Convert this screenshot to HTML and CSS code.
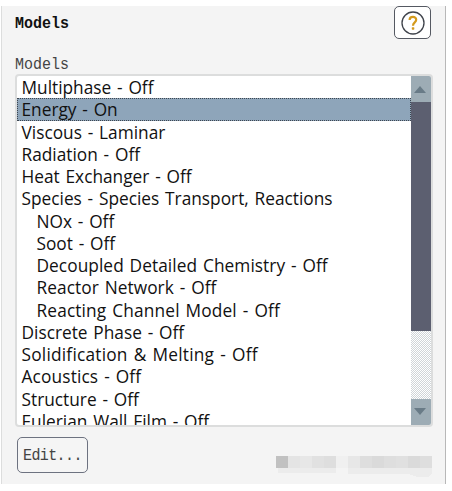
FILE: index.html
```html
<!DOCTYPE html>
<html lang="en">
<head>
<meta charset="utf-8">
<title>Models</title>
<link rel="stylesheet" href="styles.css">
</head>
<body>
<main class="panel">
  <header class="header">
    <h1 class="title mono">Models</h1>
    <button class="help" aria-label="Help">
      <svg width="24" height="24" viewBox="0 0 24 24" fill="none">
        <circle cx="12" cy="12" r="11" stroke="#3f434b" stroke-width="1.3"/>
        <path d="M8.6 9C8.7 4.9 15.2 5 15.2 8.7C15.2 11.5 12 11.2 12 14.7" stroke="#d49a1c" stroke-width="2.2"/>
        <rect x="10.8" y="16.2" width="2.5" height="2.5" rx=".6" fill="#d49a1c"/>
      </svg>
    </button>
  </header>
  <div class="label mono">Models</div>
  <section class="listbox">
    <ul class="list">
      <li class="row"><span>Multiphase - Off</span></li>
      <li class="row selected"><span>Energy - On</span></li>
      <li class="row"><span>Viscous - Laminar</span></li>
      <li class="row"><span>Radiation - Off</span></li>
      <li class="row"><span>Heat Exchanger - Off</span></li>
      <li class="row"><span>Species - Species Transport, Reactions</span></li>
      <li class="row child"><span>NOx - Off</span></li>
      <li class="row child"><span>Soot - Off</span></li>
      <li class="row child loose"><span>Decoupled Detailed Chemistry - Off</span></li>
      <li class="row child loose"><span>Reactor Network - Off</span></li>
      <li class="row child looser"><span>Reacting Channel Model - Off</span></li>
      <li class="row"><span>Discrete Phase - Off</span></li>
      <li class="row loosest"><span>Solidification &amp; Melting - Off</span></li>
      <li class="row looser"><span>Acoustics - Off</span></li>
      <li class="row"><span>Structure - Off</span></li>
      <li class="row"><span>Eulerian Wall Film - Off</span></li>
    </ul>
    <div class="scrollbar">
      <div class="arrow"><svg width="12" height="7" viewBox="0 0 12 7"><path d="M0 7L6 0L12 7Z" fill="#697b87"/></svg></div>
      <div class="thumb"></div>
      <div class="track"></div>
      <div class="arrow down"><svg width="12" height="7" viewBox="0 0 12 7"><path d="M0 0H12L6 7Z" fill="#697b87"/></svg></div>
    </div>
  </section>
  <footer class="footer">
    <button class="edit"><span class="mono">Edit...</span></button>
    <svg class="mosaic" width="158" height="24" viewBox="0 0 158 24" shape-rendering="crispEdges">
      <path fill="#c1c1c1" d="M2 0h12v12H2z"/>
      <path fill="#e4e4e4" d="M14 0h12v12H14z"/>
      <path fill="#e7e7e7" d="M26 0h12v12H26zM74 0h12v12H74z"/>
      <path fill="#e1e1e1" d="M38 0h12v12H38z"/>
      <path fill="#dedede" d="M50 0h12v12H50zM86 0h12v12H86zM110 0h12v12h-12zM146 0h12v12h-12z"/>
      <path fill="#f0f0f0" d="M62 0h12v12H62z"/>
      <path fill="#dadada" d="M98 0h12v12H98zM134 0h12v12h-12z"/>
      <path fill="#e0e0e0" d="M122 0h12v12h-12z"/>
      <path fill="#ececec" d="M4 12h58v5H4zM74 12h84v5l-3 4h-12l-9-3H74z"/>
    </svg>
  </footer>
</main>
</body>
</html>
```
FILE: styles.css
```css
* { box-sizing: border-box; }
body { margin: 0; padding-top: 6px; background: #fff; }
.panel {
  width: 445px; height: 478px; margin-left: 1px; padding: 0 12px 0 13px;
  border-left: 1px solid #dcdddd; border-right: 1px solid #b8b8b8;
  background: #f4f4f4; overflow: hidden;
}
.mono {
  display: block; font-family: "Liberation Mono", monospace; font-size: 15px;
  line-height: 20px; transform: scaleY(1.15); transform-origin: left center;
}
.header { display: flex; justify-content: space-between; height: 49px; }
.title { margin: 10px 0 0; font-weight: 700; color: #111; }
.help {
  display: flex; align-items: center; justify-content: center;
  width: 37px; height: 33px; margin: 0 2px 0 0; padding: 0;
  border: 1px solid #555962; border-radius: 5px; background: #fff;
}
.label { height: 19px; color: #444; }
.listbox {
  display: flex; width: 418px; height: 353px;
  border: 2px solid #dcdddd; border-radius: 4px; background: #fff; overflow: hidden;
}
.list {
  width: 394px; margin: 0; padding: 0; list-style: none; overflow: hidden;
  font-family: "Open Sans", "Noto Sans", sans-serif; font-size: 17.3px; color: #111;
  font-variant-ligatures: none; word-spacing: 1.3px;
}
.row {
  height: 22.27px; padding-left: 4.5px; line-height: 23px; white-space: nowrap;
}
.child { padding-left: 19.5px; }
.loose { letter-spacing: .06px; }
.looser { letter-spacing: .14px; }
.loosest { letter-spacing: .22px; }
.selected { background: #8ea5ba; outline: 1px dotted #3e4650; outline-offset: -1px; }
.scrollbar { display: flex; flex-direction: column; width: 20px; }
.arrow { display: flex; align-items: center; justify-content: center; height: 26px; padding-right: 2px; background: #9dacb5; }
.down { padding-bottom: 2px; }
.thumb { height: 229px; background: #5c5f70; }
.track {
  flex: 1; background: repeating-conic-gradient(#d0d5d8 0 25%, #fff 0 50%) 0 0 / 2px 2px;
}
.footer { display: flex; justify-content: space-between; align-items: flex-start; padding-top: 10px; }
.edit {
  width: 71px; height: 36px; margin-left: 2px; padding: 4px 0 0 5px; text-align: left;
  border: 1px solid #6d7280; border-radius: 5px; background: #f5f5f5; color: #444;
}
.edit .mono { letter-spacing: -.6px; }
.mosaic { margin: 19px 1px 0 0; }
```
